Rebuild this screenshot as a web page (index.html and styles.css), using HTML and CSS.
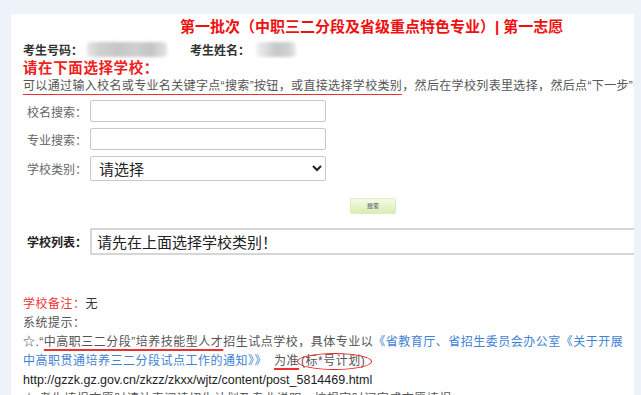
FILE: index.html
```html
<!DOCTYPE html>
<html lang="zh-CN">
<head>
  <meta charset="UTF-8">
  <title>选择学校</title>
  <link rel="stylesheet" href="styles.css">
</head>
<body>
  <div class="page">
    <h1 class="title">第一批次（中职三二分段及省级重点特色专业）| 第一志愿</h1>

    <div class="student">
      <b>考生号码：</b><span class="blur blur-no"></span>
      <b class="name-label">考生姓名：</b><span class="blur blur-name"></span>
    </div>

    <div class="pick-title">请在下面选择学校：</div>
    <div class="hint"><span class="mark">可以通过输入校名或专业名关键字点“搜索”按钮，或直接选择学校类别</span>，然后在学校列表里选择，然后点“下一步”确认。</div>

    <div class="search-form">
      <div class="form-row">
        <label class="label">校名搜索：</label>
        <input class="field" type="text">
      </div>
      <div class="form-row">
        <label class="label">专业搜索：</label>
        <input class="field" type="text">
      </div>
      <div class="form-row">
        <label class="label">学校类别：</label>
        <select class="field select">
          <option>请选择</option>
        </select>
      </div>
    </div>

    <div class="btn-row">
      <button class="search-btn">搜索</button>
    </div>

    <div class="list-row">
      <b class="list-label">学校列表：</b>
      <div class="list-box">请先在上面选择学校类别！</div>
    </div>

    <div class="notes">
      <div><span class="red">学校备注：</span><span class="dark">无</span></div>
      <div>系统提示：</div>
      <div>☆.“<span class="mark-thin">中高职三二分段”培养技能型人才</span>招生试点学校，具体专业以<span class="blue">《省教育厅、省招生委员会办公室《关于开展中高职贯通培养三二分段试点工作的通知》》</span><span class="mark-thin gap">为准</span><span class="circled">(标*号计划)</span></div>
      <div class="url">http://gzzk.gz.gov.cn/zkzz/zkxx/wjtz/content/post_5814469.html</div>
      <div>☆.考生填报志愿时请认真阅读招生计划及专业说明，按规定时间完成志愿填报。</div>
    </div>
  </div>
</body>
</html>
```

FILE: styles.css
```css
html, body {
  margin: 0;
  padding: 0;
  height: 100%;
  overflow: hidden;
}

body {
  background: #eef3fa;
  font-family: "Liberation Sans", "Noto Sans CJK SC", sans-serif;
  font-size: 12px;
  color: #555;
}

.page {
  margin: 14px 7px 0 11px;
  height: 400px;
  background: #fff;
  padding-left: 12px;
  overflow: hidden;
}

.title {
  margin: 0;
  padding: 2px 0 0 157px;
  font-size: 15px;
  line-height: 22px;
  font-weight: bold;
  color: #f01010;
  white-space: nowrap;
}

.student {
  margin-top: 1px;
  height: 20px;
  display: flex;
  align-items: center;
  color: #333;
}

.student b {
  font-size: 12px;
}

.blur {
  display: inline-block;
  height: 15px;
  border-radius: 4px;
  filter: blur(1.5px);
}

.blur-no {
  width: 80px;
  margin-left: 4px;
  background: linear-gradient(90deg, #e6e6e6 0, #d0d0d0 15%, #c6c6c6 40%, #cfcfcf 60%, #c4c4c4 80%, #e4e4e4 100%);
}

.name-label {
  margin-left: 23px;
}

.blur-name {
  width: 40px;
  margin-left: 6px;
  background: linear-gradient(90deg, #f0f0f0 0, #dfe3e3 20%, #c8c8c8 50%, #cfcfcf 80%, #ececec 100%);
}

.pick-title {
  height: 18px;
  line-height: 19px;
  font-size: 14.5px;
  font-weight: bold;
  color: #f02020;
  letter-spacing: 0.6px;
}

.hint {
  height: 18px;
  line-height: 18px;
  white-space: nowrap;
  overflow: hidden;
  letter-spacing: 0.35px;
}

.mark {
  border-bottom: 2px solid #f03030;
  padding-bottom: 1px;
}

.search-form {
  margin-top: 5px;
  display: flex;
  flex-direction: column;
  gap: 6px;
}

.form-row {
  display: flex;
  align-items: center;
  padding-left: 4px;
}

.label {
  width: 63px;
  color: #666;
}

.field {
  width: 236px;
  height: 22px;
  box-sizing: border-box;
  border: 1px solid #c8c8c8;
  border-radius: 2px;
  background: #fff;
  margin: 0;
}

.select {
  height: 25px;
  font-size: 15px;
  color: #222;
  padding-left: 4px;
  font-family: "Noto Sans CJK SC", sans-serif;
}

.btn-row {
  margin-top: 16px;
  padding-left: 327px;
}

.search-btn {
  width: 46px;
  height: 16px;
  padding: 0;
  border: 1px solid #dcedbb;
  border-radius: 2px;
  background: linear-gradient(#f5fbe8, #d8edb3);
  font-size: 6px;
  color: #445;
  font-family: "Noto Sans CJK SC", sans-serif;
}

.list-row {
  margin-top: 14px;
  display: flex;
  align-items: center;
  padding-left: 4px;
}

.list-label {
  width: 63px;
  color: #222;
  font-size: 12px;
}

.list-box {
  flex: 1;
  height: 27px;
  box-sizing: border-box;
  border: 2px solid #d6d6d6;
  border-right: none;
  border-radius: 2px 0 0 2px;
  padding-left: 5px;
  line-height: 23px;
  font-size: 15px;
  color: #222;
  font-family: "Noto Sans CJK SC", sans-serif;
}

.notes {
  margin-top: 40px;
  line-height: 19px;
  letter-spacing: 0.5px;
}

.notes > div {
  padding-right: 2px;
}

.red {
  color: #f03535;
}

.dark {
  color: #333;
}

.blue {
  color: #3e82d6;
}

.mark-thin {
  text-decoration: underline 2px #f03030;
  text-underline-offset: 3px;
}

.gap {
  margin-left: 7px;
}

.circled {
  position: relative;
  margin-left: 2px;
}

.circled::after {
  content: "";
  position: absolute;
  left: -4px;
  right: -7px;
  top: -1px;
  bottom: -2px;
  border: 1.5px solid #f02020;
  border-radius: 50%;
}

.url {
  color: #222;
  font-size: 12.5px;
  letter-spacing: 0;
}
```
